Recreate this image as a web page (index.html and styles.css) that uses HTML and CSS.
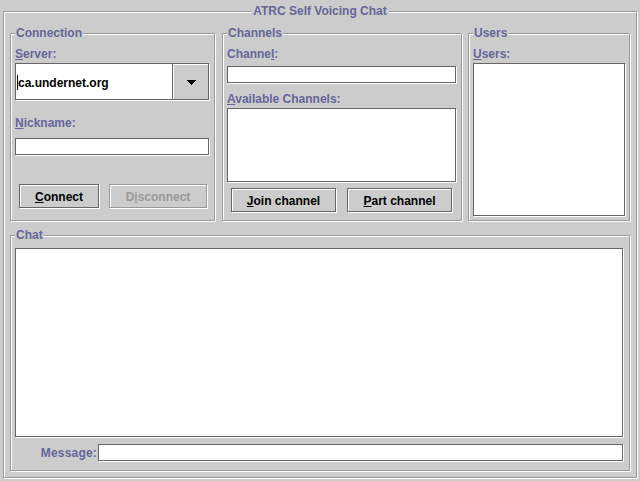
FILE: index.html
```html
<!DOCTYPE html>
<html>
<head>
<meta charset="utf-8">
<title>ATRC Self Voicing Chat</title>
<link rel="stylesheet" href="styles.css">
</head>
<body>
<div class="frame">
  <span class="frame-title">ATRC Self Voicing Chat</span>
  <div class="top-row">
    <section class="group connection">
      <span class="group-title">Connection</span>
      <div class="label"><u>S</u>erver:</div>
      <div class="combo">
        <div class="combo-editor"><span class="caret"></span>ca.undernet.org</div>
        <div class="combo-arrow">
          <svg width="9" height="5" viewBox="0 0 9 5" shape-rendering="crispEdges"><polygon points="0,0 9,0 5,5 4,5" fill="#000"/></svg>
        </div>
      </div>
      <div class="label nick-label"><u>N</u>ickname:</div>
      <div class="field nick-field"></div>
      <div class="btn-row conn-buttons">
        <button class="btn btn-connect"><u>C</u>onnect</button>
        <button class="btn btn-disconnect" disabled>D<u>i</u>sconnect</button>
      </div>
    </section>
    <section class="group channels">
      <span class="group-title">Channels</span>
      <div class="label">Channe<u>l</u>:</div>
      <div class="field channel-field"></div>
      <div class="label avail-label"><u>A</u>vailable Channels:</div>
      <div class="field channel-list"></div>
      <div class="btn-row chan-buttons">
        <button class="btn btn-chan"><u>J</u>oin channel</button>
        <button class="btn btn-chan"><u>P</u>art channel</button>
      </div>
    </section>
    <section class="group users">
      <span class="group-title">Users</span>
      <div class="label"><u>U</u>sers:</div>
      <div class="field users-list"></div>
    </section>
  </div>
  <section class="group chat">
    <span class="group-title">Chat</span>
    <div class="field chat-area"></div>
    <div class="message-row">
      <div class="message-label">Message:</div>
      <div class="field message-field"></div>
    </div>
  </section>
</div>
</body>
</html>
```

FILE: styles.css
```css
* { box-sizing: border-box; }
html, body { margin: 0; padding: 0; }
body {
  width: 640px;
  height: 481px;
  overflow: hidden;
  background: #cccccc;
  font: bold 12px "Liberation Sans", Arial, sans-serif;
  color: #666699;
}
u { text-decoration: underline; text-decoration-thickness: 1px; text-underline-offset: 1px; }

.frame {
  position: relative;
  margin: 11px 0 0 3px;
  width: 634px;
  height: 467px;
  border: 1px solid #999999;
  box-shadow: inset 1px 1px 0 #ffffff, 1px 1px 0 #ffffff;
  padding: 21px 6px 6px 6px;
  display: flex;
  flex-direction: column;
  gap: 14px;
}
.frame-title {
  position: absolute;
  top: -8px;
  left: 50%;
  transform: translateX(-50%);
  padding: 0 2px;
  background: #cccccc;
  line-height: 15px;
  white-space: nowrap;
}

.top-row { display: flex; height: 188px; }

.group {
  position: relative;
  border: 1px solid #999999;
  box-shadow: inset 1px 1px 0 #ffffff, 1px 1px 0 #ffffff;
  padding: 12px 0 0 4px;
}
.group-title {
  position: absolute;
  top: -8px;
  left: 4px;
  padding: 0 1px;
  background: #cccccc;
  line-height: 15px;
  white-space: nowrap;
}
.connection { width: 205px; margin-right: 7px; }
.channels { width: 240px; margin-right: 6px; }
.users { width: 162px; }
.chat { height: 236px; }

.label { height: 15px; line-height: 17px; white-space: nowrap; }

.field {
  background: #ffffff;
  border: 1px solid #666666;
  box-shadow: 1px 1px 0 #ffffff;
}

.combo {
  margin-top: 2px;
  width: 194px;
  height: 37px;
  display: flex;
  border: 1px solid #666666;
  box-shadow: 1px 1px 0 #ffffff;
}
.combo-editor {
  flex: 1;
  background: #ffffff;
  display: flex;
  align-items: center;
  color: #000000;
  padding: 2px 0 0 1px;
  white-space: nowrap;
}
.caret {
  display: inline-block;
  width: 1px;
  height: 15px;
  background: #000000;
}
.combo-arrow {
  width: 36px;
  border-left: 1px solid #666666;
  background: #cccccc;
  box-shadow: inset 1px 1px 0 #ffffff;
  display: flex;
  align-items: center;
  justify-content: center;
  padding-top: 1px;
}
.combo-arrow svg { display: block; margin-left: 1px; }

.nick-label { margin-top: 15px; }
.nick-field { margin-top: 8px; width: 194px; height: 17px; }

.btn-row { display: flex; padding-left: 4px; }
.conn-buttons { margin-top: 29px; gap: 10px; }
.chan-buttons { margin-top: 6px; gap: 11px; }

.btn {
  height: 24px;
  padding: 2px 0 0 0;
  margin: 0;
  background: #cccccc;
  border: 1px solid #666666;
  border-radius: 0;
  box-shadow: inset 1px 1px 0 #ffffff, 1px 1px 0 #ffffff;
  color: #000000;
  font: bold 12px "Liberation Sans", Arial, sans-serif;
  display: flex;
  align-items: center;
  justify-content: center;
}
.btn:disabled { border-color: #999999; color: #999999; }
.btn-connect { width: 80px; }
.btn-disconnect { width: 98px; }
.btn-chan { width: 105px; }

.channel-field { margin-top: 5px; width: 229px; height: 17px; }
.avail-label { margin-top: 8px; }
.channel-list { margin-top: 2px; width: 229px; height: 74px; }

.users-list { margin-top: 2px; width: 152px; height: 153px; }

.chat-area { width: 608px; height: 189px; }
.message-row { display: flex; align-items: center; margin-top: 7px; }
.message-label { width: 83px; padding-right: 1px; text-align: right; line-height: 15px; padding-top: 1px; letter-spacing: 0.2px; }
.message-field { width: 525px; height: 17px; }
```
